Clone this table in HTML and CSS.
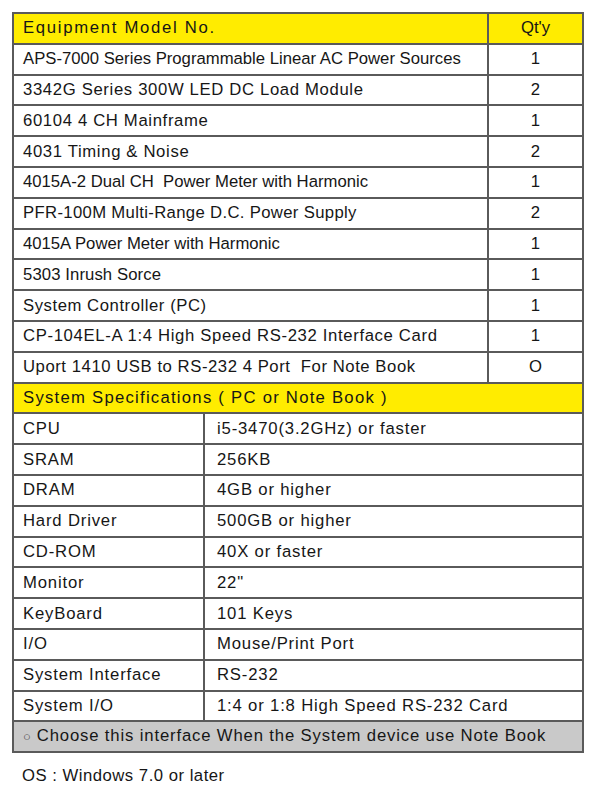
FILE: index.html
```html
<!DOCTYPE html>
<html>
<head>
<meta charset="utf-8">
<link rel="stylesheet" href="styles.css">
</head>
<body>
<div class="sheet">
  <table class="tbl equip">
    <colgroup><col class="c-name"><col class="c-qty"></colgroup>
    <tr class="head"><td class="h1">Equipment Model No.</td><td class="qty">Qt'y</td></tr>
    <tr><td>APS-7000 Series Programmable Linear AC Power Sources</td><td class="qty">1</td></tr>
    <tr><td class="wide">3342G Series 300W LED DC Load Module</td><td class="qty">2</td></tr>
    <tr><td class="wide">60104 4 CH Mainframe</td><td class="qty">1</td></tr>
    <tr><td class="wide">4031 Timing &amp; Noise</td><td class="qty">2</td></tr>
    <tr><td>4015A-2 Dual CH&nbsp; Power Meter with Harmonic</td><td class="qty">1</td></tr>
    <tr><td class="mid">PFR-100M Multi-Range D.C. Power Supply</td><td class="qty">2</td></tr>
    <tr><td>4015A Power Meter with Harmonic</td><td class="qty">1</td></tr>
    <tr><td class="tight">5303 Inrush Sorce</td><td class="qty">1</td></tr>
    <tr><td class="wide2">System Controller (PC)</td><td class="qty">1</td></tr>
    <tr><td class="wide">CP-104EL-A 1:4 High Speed RS-232 Interface Card</td><td class="qty">1</td></tr>
    <tr><td class="wide2">Uport 1410 USB to RS-232 4 Port&nbsp; For Note Book</td><td class="qty">O</td></tr>
  </table>
  <table class="tbl spec">
    <colgroup><col class="c-key"><col class="c-val"></colgroup>
    <tr class="head"><td colspan="2" class="h2">System Specifications ( PC or Note Book )</td></tr>
    <tr><td>CPU</td><td class="val">i5-3470(3.2GHz) or faster</td></tr>
    <tr><td>SRAM</td><td class="val">256KB</td></tr>
    <tr><td>DRAM</td><td class="val">4GB or higher</td></tr>
    <tr><td>Hard Driver</td><td class="val">500GB or higher</td></tr>
    <tr><td>CD-ROM</td><td class="val">40X or faster</td></tr>
    <tr><td>Monitor</td><td class="val">22"</td></tr>
    <tr><td>KeyBoard</td><td class="val">101 Keys</td></tr>
    <tr><td>I/O</td><td class="val">Mouse/Print Port</td></tr>
    <tr><td>System Interface</td><td class="val">RS-232</td></tr>
    <tr><td>System I/O</td><td class="val">1:4 or 1:8 High Speed RS-232 Card</td></tr>
    <tr class="note"><td colspan="2"><span class="ring">○</span> Choose this interface When the System device use Note Book</td></tr>
  </table>
  <p class="os">OS : Windows 7.0 or later</p>
</div>
</body>
</html>
```
FILE: styles.css
```css
html, body {
  margin: 0;
  padding: 0;
  background: #ffffff;
}
body {
  font-family: "Liberation Sans", Arial, sans-serif;
  color: #161616;
}
.sheet {
  padding: 12px 0 0 12px;
  width: 572px;
}
.tbl {
  width: 572px;
  border-collapse: collapse;
  table-layout: fixed;
  font-size: 16.7px;
}
.tbl td {
  border: 2px solid #5a5a5a;
  height: 28.8px;
  padding: 0 0 0 9px;
  white-space: nowrap;
  line-height: 18px;
  vertical-align: middle;
}
.spec {
  margin-top: -2px;
}
.spec td {
  letter-spacing: 0.82px;
}
.spec td.val {
  padding-left: 12px;
}
.c-qty { width: 95px; }
.c-key { width: 191px; }
.tbl td.qty {
  text-align: center;
  padding: 0;
}
.head td {
  background: #ffec00;
}
.equip .h1 {
  letter-spacing: 1.7px;
}
.spec .h2 {
  letter-spacing: 1.25px;
}
.equip .wide { letter-spacing: 0.65px; }
.equip .wide2 { letter-spacing: 0.55px; }
.equip .mid { letter-spacing: 0.34px; }
.equip .tight { letter-spacing: 0.1px; }
.spec .note td {
  background: #c9c9c9;
  letter-spacing: 0.85px;
}
.ring {
  font-size: 13px;
  color: #444;
  letter-spacing: 0.4px;
}
.os {
  margin: 13px 0 0 10px;
  font-size: 16.7px;
  letter-spacing: 0.5px;
}
```
